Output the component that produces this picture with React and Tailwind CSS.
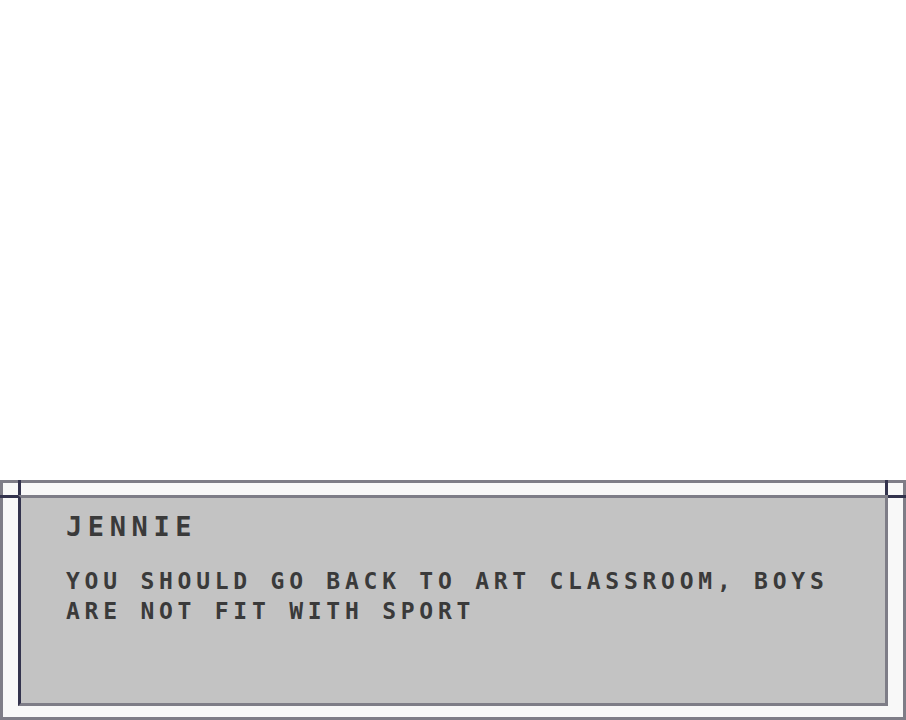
export default function App() {
  const speaker = 'JENNIE';
  const line = 'YOU SHOULD GO BACK TO ART CLASSROOM, BOYS ARE NOT FIT WITH SPORT';

  return (
    <div className="h-screen w-full bg-white flex flex-col justify-end">
      {/* dialog box */}
      <div className="relative h-[240px] bg-[#f8f8f8] border-[3px] border-[#7e7d87] px-[15px] pt-[12px] pb-[11px]">
        {/* corner ticks */}
        <div className="absolute left-[15px] -top-[3px] w-[3px] h-[15px] bg-[#33334d]" />
        <div className="absolute -left-[3px] top-[12px] w-[18px] h-[3px] bg-[#33334d]" />
        <div className="absolute right-[15px] -top-[3px] w-[3px] h-[15px] bg-[#33334d]" />
        <div className="absolute -right-[3px] top-[12px] w-[18px] h-[3px] bg-[#33334d]" />

        <div
          className="h-full bg-[#c3c3c3] border-[3px] border-[#7e7d87] border-l-[#33334d] pl-[45px] pr-[41px] pt-[13px] text-[#3a3a3a] font-bold"
          style={{ fontFamily: '"DejaVu Sans Mono", "Liberation Mono", monospace' }}
        >
          <div className="text-[27px] leading-[32px] tracking-[5.6px]">{speaker}</div>
          <p className="mt-[23px] text-[23px] leading-[30px] tracking-[4.75px]">{line}</p>
        </div>
      </div>
    </div>
  );
}
